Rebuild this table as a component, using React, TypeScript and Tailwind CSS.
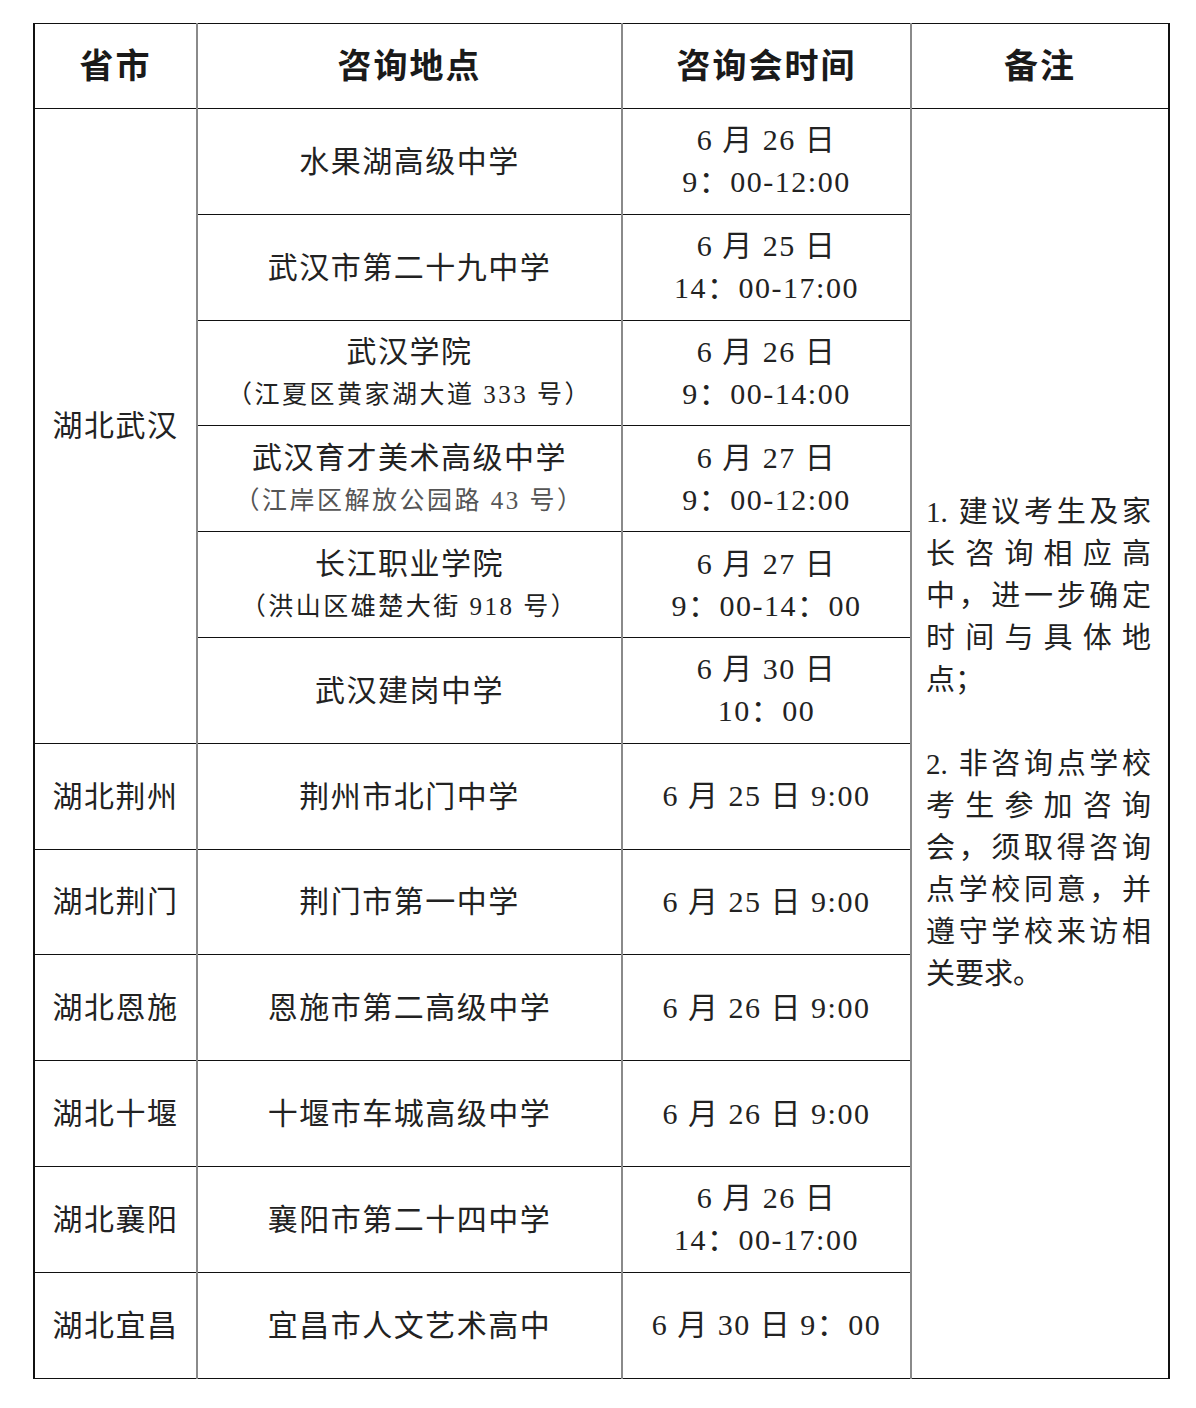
import React from 'react';

type Row = {
  province?: string;
  span?: number;
  place: string;
  address?: string;
  sans?: boolean;
  time: string[];
};

const rows: Row[] = [
  { province: '湖北武汉', span: 6, place: '水果湖高级中学', time: ['6 月 26 日', '9：00-12:00'] },
  { place: '武汉市第二十九中学', time: ['6 月 25 日', '14：00-17:00'] },
  { place: '武汉学院', address: '（江夏区黄家湖大道 333 号）', time: ['6 月 26 日', '9：00-14:00'] },
  { place: '武汉育才美术高级中学', address: '（江岸区解放公园路 43 号）', sans: true, time: ['6 月 27 日', '9：00-12:00'] },
  { place: '长江职业学院', address: '（洪山区雄楚大街 918 号）', time: ['6 月 27 日', '9：00-14：00'] },
  { place: '武汉建岗中学', time: ['6 月 30 日', '10：00'] },
  { province: '湖北荆州', span: 1, place: '荆州市北门中学', time: ['6 月 25 日 9:00'] },
  { province: '湖北荆门', span: 1, place: '荆门市第一中学', time: ['6 月 25 日 9:00'] },
  { province: '湖北恩施', span: 1, place: '恩施市第二高级中学', time: ['6 月 26 日 9:00'] },
  { province: '湖北十堰', span: 1, place: '十堰市车城高级中学', time: ['6 月 26 日 9:00'] },
  { province: '湖北襄阳', span: 1, place: '襄阳市第二十四中学', time: ['6 月 26 日', '14：00-17:00'] },
  { province: '湖北宜昌', span: 1, place: '宜昌市人文艺术高中', time: ['6 月 30 日 9：00'] },
];

// 备注 column, broken into the same lines as the printed table
const remarks: { text: string; justify: boolean }[] = [
  { text: '1. 建议考生及家', justify: true },
  { text: '长咨询相应高', justify: true },
  { text: '中，进一步确定', justify: true },
  { text: '时间与具体地', justify: true },
  { text: '点；', justify: false },
  { text: '\u00a0', justify: false },
  { text: '2. 非咨询点学校', justify: true },
  { text: '考生参加咨询', justify: true },
  { text: '会，须取得咨询', justify: true },
  { text: '点学校同意，并', justify: true },
  { text: '遵守学校来访相', justify: true },
  { text: '关要求。', justify: false },
];

const cell = 'border-y-[1.5px] border-y-[#111] border-x-2 border-x-[#8a8a8a] text-center align-middle';

export default function App() {
  return (
    <div className="min-h-[1408px] bg-white pt-[23px] pl-[33px] font-['Liberation_Serif','Noto_Sans_CJK_SC',serif] text-[#222]">
      <table className="w-[1135px] table-fixed border-collapse">
        <colgroup>
          <col className="w-[163px]" />
          <col className="w-[425px]" />
          <col className="w-[289px]" />
          <col className="w-[258px]" />
        </colgroup>
        <thead>
          <tr className="h-[85px]">
            {['省市', '咨询地点', '咨询会时间', '备注'].map((h, i) => (
              <th
                key={h}
                className={`${cell} ${i === 0 ? 'border-l-[#111]' : ''} ${i === 3 ? 'border-r-[#111]' : ''} text-[34px] font-semibold tracking-[2px] text-[#1a1a1a]`}
              >
                {h}
              </th>
            ))}
          </tr>
        </thead>
        <tbody>
          {rows.map((r, i) => (
            <tr key={r.place} className="h-[105.8px]">
              {r.province && (
                <td rowSpan={r.span} className={`${cell} border-l-[#111] text-[30px] tracking-[1.5px]`}>
                  {r.province}
                </td>
              )}
              <td className={`${cell} leading-[43px]`}>
                <div className="text-[30px] tracking-[1.5px]">{r.place}</div>
                {r.address && (
                  <div className={`text-[25px] tracking-[2.5px] ${r.sans ? 'text-[#555]' : ''}`}>{r.address}</div>
                )}
              </td>
              <td className={`${cell} text-[30px] leading-[42px] tracking-[1.5px]`}>
                {r.time.map((t) => (
                  <div key={t}>{t}</div>
                ))}
              </td>
              {i === 0 && (
                <td rowSpan={12} className={`${cell} border-r-[#111] pl-[14px] pr-[17px] text-left text-[29px] leading-[42px]`}>
                  {remarks.map((l, k) => (
                    <div key={k} className={l.justify ? '[text-align-last:justify] text-justify' : ''}>
                      {l.text}
                    </div>
                  ))}
                </td>
              )}
            </tr>
          ))}
        </tbody>
      </table>
    </div>
  );
}
